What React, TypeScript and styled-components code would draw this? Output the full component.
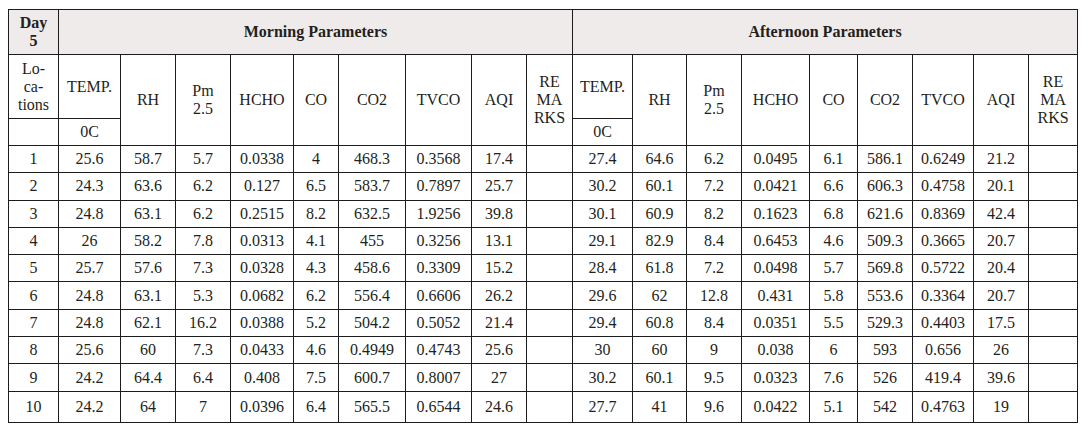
import React from 'react';
import styled, { createGlobalStyle } from 'styled-components';

const GlobalStyle = createGlobalStyle`
  html, body {
    margin: 0;
    padding: 0;
    background: #ffffff;
  }
`;

const Page = styled.div`
  padding: 9px 0 0 8px;
  font-family: "Liberation Serif", "Times New Roman", serif;
  color: #231f20;
`;

const Table = styled.table`
  border-collapse: collapse;
  table-layout: fixed;
  width: 1069px;
  font-size: 16px;
  line-height: 18px;
`;

const Cell = styled.td<{ $head?: boolean }>`
  border: 1px solid #1c1c1c;
  text-align: center;
  vertical-align: middle;
  padding: 0 2px;
  background: ${p => (p.$head ? '#efebea' : '#ffffff')};
  font-weight: ${p => (p.$head ? 700 : 400)};
`;

const Row = styled.tr<{ $h: number }>`
  height: ${p => p.$h}px;
`;

const widths = [50, 62, 55, 55, 63, 45, 67, 66, 55, 46, 60, 54, 55, 68, 48, 55, 61, 55, 49];

type Reading = (string | number)[];

const data: { loc: number; morning: Reading; afternoon: Reading }[] = [
  { loc: 1, morning: ['25.6', '58.7', '5.7', '0.0338', '4', '468.3', '0.3568', '17.4'], afternoon: ['27.4', '64.6', '6.2', '0.0495', '6.1', '586.1', '0.6249', '21.2'] },
  { loc: 2, morning: ['24.3', '63.6', '6.2', '0.127', '6.5', '583.7', '0.7897', '25.7'], afternoon: ['30.2', '60.1', '7.2', '0.0421', '6.6', '606.3', '0.4758', '20.1'] },
  { loc: 3, morning: ['24.8', '63.1', '6.2', '0.2515', '8.2', '632.5', '1.9256', '39.8'], afternoon: ['30.1', '60.9', '8.2', '0.1623', '6.8', '621.6', '0.8369', '42.4'] },
  { loc: 4, morning: ['26', '58.2', '7.8', '0.0313', '4.1', '455', '0.3256', '13.1'], afternoon: ['29.1', '82.9', '8.4', '0.6453', '4.6', '509.3', '0.3665', '20.7'] },
  { loc: 5, morning: ['25.7', '57.6', '7.3', '0.0328', '4.3', '458.6', '0.3309', '15.2'], afternoon: ['28.4', '61.8', '7.2', '0.0498', '5.7', '569.8', '0.5722', '20.4'] },
  { loc: 6, morning: ['24.8', '63.1', '5.3', '0.0682', '6.2', '556.4', '0.6606', '26.2'], afternoon: ['29.6', '62', '12.8', '0.431', '5.8', '553.6', '0.3364', '20.7'] },
  { loc: 7, morning: ['24.8', '62.1', '16.2', '0.0388', '5.2', '504.2', '0.5052', '21.4'], afternoon: ['29.4', '60.8', '8.4', '0.0351', '5.5', '529.3', '0.4403', '17.5'] },
  { loc: 8, morning: ['25.6', '60', '7.3', '0.0433', '4.6', '0.4949', '0.4743', '25.6'], afternoon: ['30', '60', '9', '0.038', '6', '593', '0.656', '26'] },
  { loc: 9, morning: ['24.2', '64.4', '6.4', '0.408', '7.5', '600.7', '0.8007', '27'], afternoon: ['30.2', '60.1', '9.5', '0.0323', '7.6', '526', '419.4', '39.6'] },
  { loc: 10, morning: ['24.2', '64', '7', '0.0396', '6.4', '565.5', '0.6544', '24.6'], afternoon: ['27.7', '41', '9.6', '0.0422', '5.1', '542', '0.4763', '19'] },
];

const ParamHeaders: React.FC = () => (
  <>
    <Cell>TEMP.</Cell>
    <Cell rowSpan={2}>RH</Cell>
    <Cell rowSpan={2}>Pm<br />2.5</Cell>
    <Cell rowSpan={2}>HCHO</Cell>
    <Cell rowSpan={2}>CO</Cell>
    <Cell rowSpan={2}>CO2</Cell>
    <Cell rowSpan={2}>TVCO</Cell>
    <Cell rowSpan={2}>AQI</Cell>
    <Cell rowSpan={2}>RE<br />MA<br />RKS</Cell>
  </>
);

const Readings: React.FC<{ values: Reading }> = ({ values }) => (
  <>
    {values.map((v, i) => (
      <Cell key={i}>{v}</Cell>
    ))}
    <Cell />
  </>
);

const App: React.FC = () => {
  return (
    <Page>
      <GlobalStyle />
      <Table>
        <colgroup>
          {widths.map((w, i) => (
            <col key={i} style={{ width: w }} />
          ))}
        </colgroup>
        <tbody>
          <Row $h={45}>
            <Cell $head>Day<br />5</Cell>
            <Cell $head colSpan={9}>Morning Parameters</Cell>
            <Cell $head colSpan={9}>Afternoon Parameters</Cell>
          </Row>
          <Row $h={64}>
            <Cell>Lo-<br />ca-<br />tions</Cell>
            <ParamHeaders />
            <ParamHeaders />
          </Row>
          <Row $h={27}>
            <Cell />
            <Cell>0C</Cell>
            <Cell>0C</Cell>
          </Row>
          {data.map((d, i) => (
            <Row key={d.loc} $h={i === data.length - 1 ? 31 : 27.3}>
              <Cell>{d.loc}</Cell>
              <Readings values={d.morning} />
              <Readings values={d.afternoon} />
            </Row>
          ))}
        </tbody>
      </Table>
    </Page>
  );
};

export default App;
